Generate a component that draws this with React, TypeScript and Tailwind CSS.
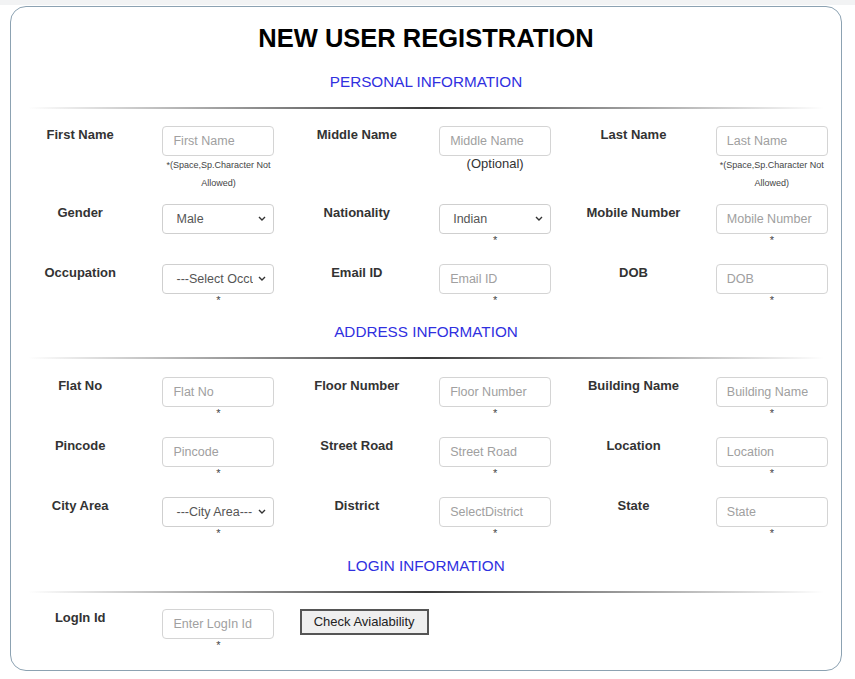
import React from 'react';

type Field = {
  label: string;
  placeholder: string;
  kind?: 'input' | 'select';
  value?: string;
  note?: 'star' | 'hint' | 'optional' | 'none';
};

const personal: Field[][] = [
  [
    { label: 'First Name', placeholder: 'First Name', note: 'hint' },
    { label: 'Middle Name', placeholder: 'Middle Name', note: 'optional' },
    { label: 'Last Name', placeholder: 'Last Name', note: 'hint' },
  ],
  [
    { label: 'Gender', placeholder: '', kind: 'select', value: 'Male', note: 'none' },
    { label: 'Nationality', placeholder: '', kind: 'select', value: 'Indian' },
    { label: 'Mobile Number', placeholder: 'Mobile Number' },
  ],
  [
    { label: 'Occupation', placeholder: '', kind: 'select', value: '---Select Occupation---' },
    { label: 'Email ID', placeholder: 'Email ID' },
    { label: 'DOB', placeholder: 'DOB' },
  ],
];

const address: Field[][] = [
  [
    { label: 'Flat No', placeholder: 'Flat No' },
    { label: 'Floor Number', placeholder: 'Floor Number' },
    { label: 'Building Name', placeholder: 'Building Name' },
  ],
  [
    { label: 'Pincode', placeholder: 'Pincode' },
    { label: 'Street Road', placeholder: 'Street Road' },
    { label: 'Location', placeholder: 'Location' },
  ],
  [
    { label: 'City Area', placeholder: '', kind: 'select', value: '---City Area---' },
    { label: 'District', placeholder: 'SelectDistrict' },
    { label: 'State', placeholder: 'State' },
  ],
];

const Chevron = () => (
  <svg className="pointer-events-none absolute right-[8px] top-[12px]" width="8" height="5" viewBox="0 0 8 5">
    <polyline points="1,1 4,4 7,1" fill="none" stroke="#333" strokeWidth="1.4" />
  </svg>
);

const Control = ({ f }: { f: Field }) => {
  if (f.kind === 'select') {
    return (
      <div className="relative w-[112px]">
        <select
          defaultValue={f.value}
          className="h-[30px] w-[112px] appearance-none rounded-[4px] border border-[#cfcfcf] bg-white pl-[13px] pr-[20px] text-[12.5px] text-[#555] outline-none"
        >
          <option>{f.value}</option>
        </select>
        <Chevron />
      </div>
    );
  }
  return (
    <input
      placeholder={f.placeholder}
      className="h-[30px] w-[112px] rounded-[4px] border border-[#d4d4d4] bg-white pl-[10px] text-[12.5px] text-[#555] outline-none placeholder:text-[#a0a0a0]"
    />
  );
};

const Star = () => <p className="-mt-[3px] pb-[3px] text-center text-[11px] leading-[18px] text-[#444]">*</p>;

const Note = ({ note }: { note?: Field['note'] }) => {
  if (note === 'none') return null;
  if (note === 'hint')
    return (
      <p className="w-[112px] text-center text-[9px] leading-[18px] text-[#444]">
        *(Space,Sp.Character Not Allowed)
      </p>
    );
  if (note === 'optional')
    return <p className="text-center text-[13px] leading-[16px] text-[#333]">(Optional)</p>;
  return <Star />;
};

const Row = ({ fields }: { fields: Field[] }) => (
  <div className="grid grid-cols-6 items-start">
    {fields.map((f) => (
      <React.Fragment key={f.label}>
        <div className="pt-px text-center text-[13px] font-bold leading-[16px] text-[#333]">{f.label}</div>
        <div className="flex flex-col items-center">
          <Control f={f} />
          <Note note={f.note} />
        </div>
      </React.Fragment>
    ))}
  </div>
);

const Section = ({ title, className }: { title: string; className: string }) => (
  <div className={className}>
    <h2 className="text-center text-[15.25px] leading-[20px] text-[#3030df]">{title}</h2>
    <div className="mx-[17px] mt-[15px] h-[2px] bg-linear-to-r from-transparent via-[#3a3a3a] to-transparent" />
  </div>
);

export default function App() {
  return (
    <div className="min-h-screen bg-white font-['Liberation_Sans',Arial,sans-serif]">
      <div className="h-[5px] bg-[#f2f3f4]" />
      <div className="ml-[10px] mt-[1px] w-[832px] rounded-[16px] border border-[#8ca2b2] bg-white pb-[13px] pt-[16px]">
        <h1 className="text-center text-[25.5px] font-bold leading-[30px] text-black">NEW USER REGISTRATION</h1>

        <Section title="PERSONAL INFORMATION" className="mt-[19px]" />
        <div className="mt-[17px] flex flex-col gap-[12px]">
          {personal.map((r, i) => (
            <Row key={i} fields={r} />
          ))}
        </div>

        <Section title="ADDRESS INFORMATION" className="mt-[10px]" />
        <div className="mt-[18px] flex flex-col gap-[12px]">
          {address.map((r, i) => (
            <Row key={i} fields={r} />
          ))}
        </div>

        <Section title="LOGIN INFORMATION" className="mt-[11px]" />
        <div className="mt-[16px] grid grid-cols-6 items-start">
          <div className="pt-px text-center text-[13px] font-bold leading-[16px] text-[#333]">LogIn Id</div>
          <div className="flex flex-col items-center">
            <input
              placeholder="Enter LogIn Id"
              className="h-[30px] w-[112px] rounded-[4px] border border-[#d4d4d4] bg-white pl-[10px] text-[12.5px] text-[#555] outline-none placeholder:text-[#a0a0a0]"
            />
            <Star />
          </div>
          <div className="col-span-2 pl-[12px]">
            <button className="h-[26px] w-[129px] whitespace-nowrap border-2 border-[#555] bg-[#efefef] text-[13px] text-[#222]">
              Check Avialability
            </button>
          </div>
        </div>
      </div>
    </div>
  );
}
